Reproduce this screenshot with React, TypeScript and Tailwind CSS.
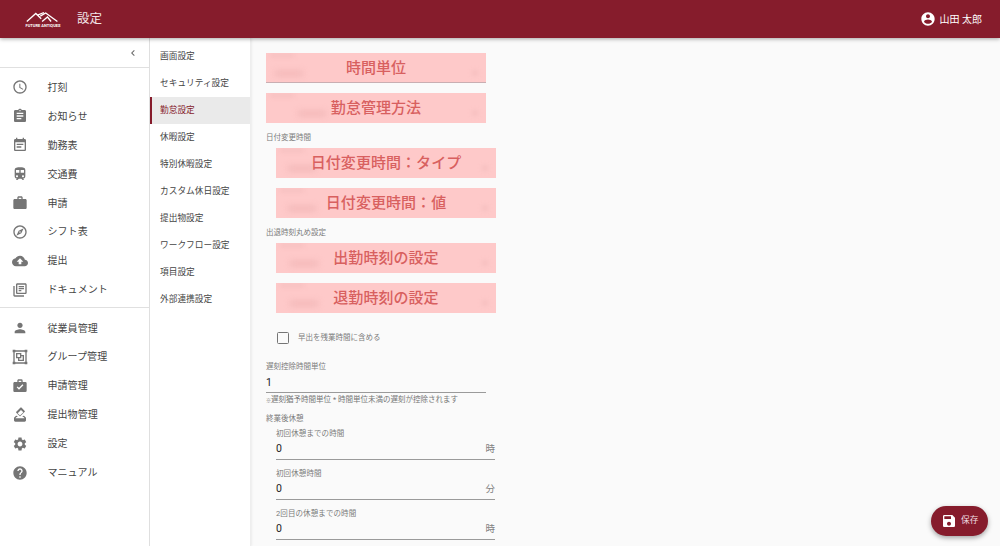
import React from "react";

const P = ({ d, className = "" }: { d: string; className?: string }) => (
  <svg viewBox="0 0 24 24" className={className} fill="currentColor"><path d={d} /></svg>
);

const I = {
  time: "M11.99 2C6.47 2 2 6.48 2 12s4.47 10 9.99 10C17.52 22 22 17.52 22 12S17.52 2 11.99 2zM12 20c-4.42 0-8-3.58-8-8s3.58-8 8-8 8 3.58 8 8-3.58 8-8 8zm.5-13H11v6l5.25 3.15.75-1.23-4.5-2.67z",
  assignment: "M19 3h-4.18C14.4 1.84 13.3 1 12 1c-1.3 0-2.4.84-2.82 2H5c-1.1 0-2 .9-2 2v14c0 1.1.9 2 2 2h14c1.1 0 2-.9 2-2V5c0-1.1-.9-2-2-2zm-7 0c.55 0 1 .45 1 1s-.45 1-1 1-1-.45-1-1 .45-1 1-1zm2 14H7v-2h7v2zm3-4H7v-2h10v2zm0-4H7V7h10v2z",
  event: "M17 10H7v2h10v-2zm2-7h-1V1h-2v2H8V1H6v2H5c-1.11 0-1.99.9-1.99 2L3 19c0 1.1.89 2 2 2h14c1.1 0 2-.9 2-2V5c0-1.1-.9-2-2-2zm0 16H5V8h14v11zm-5-5H7v2h7v-2z",
  train: "M12 2c-4 0-8 .5-8 4v9.5C4 17.43 5.57 19 7.5 19L6 20.5v.5h2.23l2-2H14l2 2h2v-.5L16.5 19c1.93 0 3.5-1.57 3.5-3.5V6c0-3.5-3.58-4-8-4zM7.5 17c-.83 0-1.5-.67-1.5-1.5S6.67 14 7.5 14s1.5.67 1.5 1.5S8.33 17 7.5 17zm3.5-7H6V6h5v4zm2 0V6h5v4h-5zm3.5 7c-.83 0-1.5-.67-1.5-1.5s.67-1.5 1.5-1.5 1.5.67 1.5 1.5-.67 1.5-1.5 1.5z",
  work: "M20 6h-4V4c0-1.11-.89-2-2-2h-4c-1.11 0-2 .89-2 2v2H4c-1.11 0-1.99.89-1.99 2L2 19c0 1.11.89 2 2 2h16c1.11 0 2-.89 2-2V8c0-1.11-.89-2-2-2zm-6 0h-4V4h4v2z",
  explore: "M12 2C6.48 2 2 6.48 2 12s4.48 10 10 10 10-4.48 10-10S17.52 2 12 2zm0 18c-4.41 0-8-3.59-8-8s3.59-8 8-8 8 3.59 8 8-3.59 8-8 8zm-5.5-2.5l7.51-3.49L17.5 6.5 9.99 9.99 6.5 17.5zm5.5-6.6c.61 0 1.1.49 1.1 1.1s-.49 1.1-1.1 1.1-1.1-.49-1.1-1.1.49-1.1 1.1-1.1z",
  cloud: "M19.35 10.04C18.67 6.59 15.64 4 12 4 9.11 4 6.6 5.64 5.35 8.04 2.34 8.36 0 10.91 0 14c0 3.31 2.69 6 6 6h13c2.76 0 5-2.24 5-5 0-2.64-2.05-4.78-4.65-4.96zM14 13v4h-4v-4H7l5-5 5 5h-3z",
  books: "M4 6H2v14c0 1.1.9 2 2 2h14v-2H4V6zm16-4H8c-1.1 0-2 .9-2 2v12c0 1.1.9 2 2 2h12c1.1 0 2-.9 2-2V4c0-1.1-.9-2-2-2zm0 14H8V4h12v12zM10 9h8v2h-8zm0 3h4v2h-4zm0-6h8v2h-8z",
  person: "M12 12c2.21 0 4-1.79 4-4s-1.79-4-4-4-4 1.79-4 4 1.79 4 4 4zm0 2c-2.67 0-8 1.34-8 4v2h16v-2c0-2.66-5.33-4-8-4z",
  group: "M1,1V5H2V19H1V23H5V22H19V23H23V19H22V5H23V1H19V2H5V1M5,4H19V5H20V19H19V20H5V19H4V5H5M6,6V14H9V18H18V9H14V6M8,8H12V12H8M14,11H16V16H11V14H14",
  brief: "M10,2H14A2,2 0 0,1 16,4V6H20A2,2 0 0,1 22,8V19A2,2 0 0,1 20,21H4C2.89,21 2,20.1 2,19V8C2,6.89 2.89,6 4,6H8V4C8,2.89 8.89,2 10,2M14,6V4H10V6H14M10.5,17.5L17.09,10.91L15.68,9.5L10.5,14.67L8.41,12.59L7,14L10.5,17.5Z",
  vote: "M18 13h-.68l-2 2h1.91L19 17H5l1.78-2h2.05l-2-2H6l-3 3v4c0 1.1.89 2 1.99 2H19c1.1 0 2-.89 2-2v-4l-3-3zm-1-5.05l-4.95 4.95-3.54-3.54 4.95-4.95L17 7.95zm-4.24-7.07L6.39 7.25c-.39.39-.39 1.02 0 1.41l4.95 4.95c.39.39 1.02.39 1.41 0l6.36-6.36c.39-.39.39-1.02 0-1.41L14.16.88c-.38-.39-1.01-.39-1.4 0z",
  settings: "M19.14 12.94c.04-.3.06-.61.06-.94 0-.32-.02-.64-.07-.94l2.03-1.58c.18-.14.23-.41.12-.61l-1.92-3.32c-.12-.22-.37-.29-.59-.22l-2.39.96c-.5-.38-1.03-.7-1.62-.94l-.36-2.54c-.04-.24-.24-.41-.48-.41h-3.84c-.24 0-.43.17-.47.41l-.36 2.54c-.59.24-1.13.57-1.62.94l-2.39-.96c-.22-.08-.47 0-.59.22L2.74 8.87c-.12.21-.08.47.12.61l2.03 1.58c-.05.3-.09.63-.09.94s.02.64.07.94l-2.03 1.58c-.18.14-.23.41-.12.61l1.92 3.32c.12.22.37.29.59.22l2.39-.96c.5.38 1.03.7 1.62.94l.36 2.54c.05.24.24.41.48.41h3.84c.24 0 .44-.17.47-.41l.36-2.54c.59-.24 1.13-.56 1.62-.94l2.39.96c.22.08.47 0 .59-.22l1.92-3.32c.12-.22.07-.47-.12-.61l-2.01-1.58zM12 15.6c-1.98 0-3.6-1.62-3.6-3.6s1.62-3.6 3.6-3.6 3.6 1.62 3.6 3.6-1.62 3.6-3.6 3.6z",
  help: "M12 2C6.48 2 2 6.48 2 12s4.48 10 10 10 10-4.48 10-10S17.52 2 12 2zm1 17h-2v-2h2v2zm2.07-7.75l-.9.92C13.45 12.9 13 13.5 13 15h-2v-.5c0-1.1.45-2.1 1.17-2.83l1.24-1.26c.37-.36.59-.86.59-1.41 0-1.1-.9-2-2-2s-2 .9-2 2H8c0-2.21 1.79-4 4-4s4 1.79 4 4c0 .88-.36 1.68-.93 2.25z",
  account: "M12 2C6.48 2 2 6.48 2 12s4.48 10 10 10 10-4.48 10-10S17.52 2 12 2zm0 3c1.66 0 3 1.34 3 3s-1.34 3-3 3-3-1.34-3-3 1.34-3 3-3zm0 14.2c-2.5 0-4.71-1.28-6-3.22.03-1.99 4-3.08 6-3.08 1.99 0 5.97 1.09 6 3.08-1.29 1.94-3.5 3.22-6 3.22z",
  save: "M17 3H5c-1.11 0-2 .9-2 2v14c0 1.1.89 2 2 2h14c1.1 0 2-.9 2-2V7l-4-4zm-5 16c-1.66 0-3-1.34-3-3s1.34-3 3-3 3 1.34 3 3-1.34 3-3 3zm3-10H5V5h10v4z",
};

const nav1: [string, string][] = [
  [I.time, "打刻"], [I.assignment, "お知らせ"], [I.event, "勤務表"], [I.train, "交通費"],
  [I.work, "申請"], [I.explore, "シフト表"], [I.cloud, "提出"], [I.books, "ドキュメント"],
];
const nav2: [string, string][] = [
  [I.person, "従業員管理"], [I.group, "グループ管理"], [I.brief, "申請管理"],
  [I.vote, "提出物管理"], [I.settings, "設定"], [I.help, "マニュアル"],
];
const sub = ["画面設定", "セキュリティ設定", "勤怠設定", "休暇設定", "特別休暇設定", "カスタム休日設定", "提出物設定", "ワークフロー設定", "項目設定", "外部連携設定"];

const NavRow = ({ icon, label }: { icon: string; label: string }) => (
  <div className="flex h-[28.9px] items-center pl-3">
    <P d={icon} className="h-4 w-4 shrink-0 text-[#757575]" />
    <span className="ml-[19.5px] text-[10px] tracking-[0.05px] text-[#444]">{label}</span>
  </div>
);

const Redacted = ({ title, line = false, dark = 300 }: { title: string; line?: boolean; dark?: number }) => (
  <div className={`relative flex h-[30px] w-[220px] items-center justify-center overflow-hidden bg-[#fec9c9] pt-px ${line ? "border-b border-[#c9aeb2] pt-[2px]" : ""}`}>
    <div className="absolute left-[4px] top-[1px] h-[3px] w-[24px] bg-[#f5bebe] blur-[2px]" />
    <div className="absolute top-[18px] h-[5px] w-[28px] bg-[#f2b6b6] blur-[3px]" style={{ left: dark - 266 }} />
    <div className="absolute right-[8px] top-[17px] h-[6px] w-[6px] rounded-full bg-[#f5bfbf] blur-[2px]" />
    <span className="relative text-[15px] font-medium tracking-[0.05px] text-[#d8605f]">{title}</span>
  </div>
);

const Field = ({ label, value, unit }: { label: string; value: string; unit: string }) => (
  <div className="mb-[8px] w-[219px]">
    <div className="h-[11px] text-[7.5px] leading-[11px] tracking-[0.1px] text-[#7a7a7a]">{label}</div>
    <div className="flex h-[21px] items-center justify-between border-b border-[#9a9a9a]">
      <span className="text-[10.5px] text-[#222]">{value}</span>
      <span className="text-[9.5px] text-[#808080]">{unit}</span>
    </div>
  </div>
);

export default function App() {
  return (
    <div className="relative flex h-[546px] w-[1000px] flex-col overflow-hidden bg-[#fafafa] font-['Roboto','Noto_Sans_CJK_JP',sans-serif]">
      <header className="relative z-10 flex h-[38px] shrink-0 items-center justify-between bg-[#861c2c] pl-[23px] pr-[18px] text-white shadow-[0_1px_4px_rgba(0,0,0,0.35)]">
        <div className="flex items-center">
          <div className="flex w-[40px] flex-col items-center">
            <svg viewBox="0 0 40 12" className="h-[12px] w-[36px]" fill="none" stroke="#fff" strokeWidth="1.5">
              <path d="M2 11 L12 2 L18 8 M14 4 L21 1 M17 5 L23 1.5 L36 11 M19 11 L25 6 L29 11" />
            </svg>
            <span className="whitespace-nowrap text-[4px] font-bold leading-[5px]">FUTURE ANTIQUES</span>
          </div>
          <span className="ml-[14px] text-[12.5px] text-[#f3e6e8]">設定</span>
        </div>
        <div className="flex items-center">
          <P d={I.account} className="h-[16px] w-[16px]" />
          <span className="ml-[4px] text-[10px]">山田 太郎</span>
        </div>
      </header>

      <div className="flex min-h-0 flex-1">
        <aside className="w-[150px] shrink-0 border-r border-[#e0e0e0] bg-white">
          <div className="flex h-[30px] items-center justify-end border-b border-[#e0e0e0] pb-[0px] pr-[10px] pt-[1px]">
            <svg viewBox="0 0 24 24" className="h-[12px] w-[12px] text-[#666]" fill="currentColor"><path d="M15.41 7.41 14 6l-6 6 6 6 1.41-1.41L10.83 12z" /></svg>
          </div>
          <div className="border-b border-[#e0e0e0] pb-[3px] pt-[5px]">
            {nav1.map(([i, l]) => <NavRow key={l} icon={i} label={l} />)}
          </div>
          <div className="pt-[5.5px]">
            {nav2.map(([i, l]) => <NavRow key={l} icon={i} label={l} />)}
          </div>
        </aside>

        <nav className="w-[101px] shrink-0 border-r border-[#eeeeee] bg-white pt-[5px] shadow-[1px_0_2px_rgba(0,0,0,0.06)]">
          {sub.map((s) => {
            const on = s === "勤怠設定";
            return (
              <div key={s} className={`flex h-[27px] items-center pt-px text-[8.7px] ${on ? "border-l-2 border-[#861c2c] bg-[#eaeaea] pl-2 text-[#861c2c]" : "pl-[10px] text-[#444]"}`}>
                {s}
              </div>
            );
          })}
        </nav>

        <main className="min-w-0 flex-1 pl-[15px] pt-[15px]">
          <Redacted title="時間単位" line dark={275} />
          <div className="mt-[10px]"><Redacted title="勤怠管理方法" dark={298} /></div>

          <div className="mt-[9px] h-[12px] text-[7.5px] leading-[12px] text-[#7a7a7a]">日付変更時間</div>
          <div className="ml-[10px] mt-[4px] flex flex-col gap-[10px]">
            <Redacted title="日付変更時間：タイプ" dark={278} />
            <Redacted title="日付変更時間：値" dark={278} />
          </div>

          <div className="mt-[9px] h-[12px] text-[7.5px] leading-[12px] text-[#7a7a7a]">出退時刻丸め設定</div>
          <div className="ml-[10px] mt-[4px] flex flex-col gap-[10px]">
            <Redacted title="出勤時刻の設定" dark={280} />
            <Redacted title="退勤時刻の設定" dark={280} />
          </div>

          <div className="ml-[11px] mt-[16px] flex h-[17px] items-center">
            <div className="h-[12px] w-[12px] rounded-[1.5px] border-[1.5px] border-[#757575]" />
            <span className="ml-[9px] text-[7.5px] text-[#7a7a7a]">早出を残業時間に含める</span>
          </div>

          <div className="mt-[15px] h-[11px] text-[7.5px] leading-[11px] text-[#7a7a7a]">遅刻控除時間単位</div>
          <div className="flex h-[21px] w-[220px] items-center border-b border-[#9a9a9a] pt-px text-[10.5px] text-[#222]">1</div>
          <div className="mt-px h-[12px] whitespace-nowrap text-[7.5px] leading-[12px] text-[#757575]"><span className="text-[5px]">※</span>遅刻猶予時間単位 * 時間単位未満の遅刻が控除されます</div>

          <div className="mt-[7px] h-[12px] text-[7.5px] leading-[12px] text-[#7a7a7a]">終業後休憩</div>
          <div className="ml-[10px] mt-[3px]">
            <Field label="初回休憩までの時間" value="0" unit="時" />
            <Field label="初回休憩時間" value="0" unit="分" />
            <Field label="2回目の休憩までの時間" value="0" unit="時" />
          </div>
        </main>
      </div>

      <button className="absolute left-[931px] top-[506px] flex h-[30px] w-[57px] items-center rounded-full bg-[#861c2c] pl-[10px] text-white shadow-[0_2px_5px_rgba(0,0,0,0.35)]">
        <P d={I.save} className="h-[16px] w-[16px]" />
        <span className="ml-[4px] text-[8.7px] text-[#eedde0]">保存</span>
      </button>
    </div>
  );
}
